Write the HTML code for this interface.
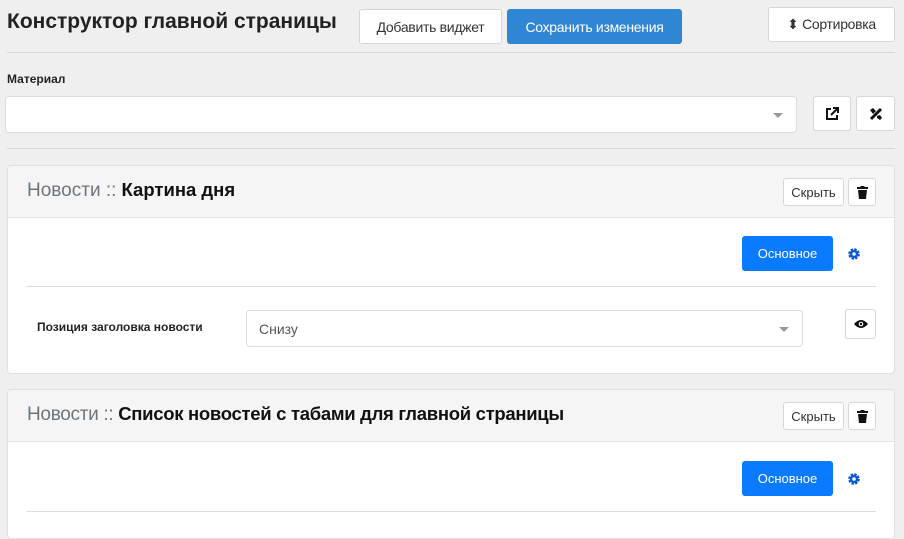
<!DOCTYPE html>
<html><head><meta charset="utf-8"><style>
*{box-sizing:border-box;margin:0;padding:0}
body{width:904px;height:525px;overflow:hidden;background:#efefef;font-family:"Liberation Sans",sans-serif;position:relative;color:#212529}
.a{position:absolute}
.btn{position:absolute;background:#fff;border:1px solid #d6d6d6;border-radius:3px;display:flex;align-items:center;justify-content:center;font-size:13px;color:#333}
.card{position:absolute;left:7px;width:888px;background:#fff;border:1px solid #e0e0e0;border-radius:4px;overflow:hidden}
.hd{height:52px;background:#f5f5f5;border-bottom:1px solid #e3e3e3;position:relative}
.ttl{position:absolute;left:19px;top:13px;font-size:18.5px;color:#111;font-weight:bold;white-space:nowrap}
.ttl span{color:#6c757d;font-weight:normal;font-size:19px}
.blue{position:absolute;background:#0a7bff;color:#fff;border-radius:3px;font-size:13px;display:flex;align-items:center;justify-content:center}
.caret{position:absolute;width:0;height:0;border-left:5px solid transparent;border-right:5px solid transparent;border-top:5px solid #999}
</style></head><body>
<div class="a" style="left:7px;top:10px;font-size:21px;font-weight:bold;color:#222;white-space:nowrap">Конструктор главной страницы</div>
<div class="btn" style="left:359px;top:9px;width:143px;height:35px;font-size:14px;letter-spacing:-0.3px">Добавить виджет</div>
<div class="btn" style="left:507px;top:9px;width:175px;height:35px;font-size:14px;background:#2f87d4;border-color:#2f87d4;color:#fff;letter-spacing:-0.3px">Сохранить изменения</div>
<div class="btn" style="left:768px;top:7px;width:127px;height:35px;font-size:14px;letter-spacing:-0.3px">⬍&nbsp;Сортировка</div>
<div class="a" style="left:7px;top:52px;width:888px;height:1px;background:#d8d8d8"></div>
<div class="a" style="left:7px;top:72px;font-size:12px;font-weight:bold">Материал</div>
<div class="a" style="left:5px;top:96px;width:792px;height:37px;background:#fff;border:1px solid #ddd;border-radius:4px"></div>
<div class="caret" style="left:773px;top:113px"></div>
<div class="btn" style="left:813px;top:96px;width:38px;height:35px"><svg width="14" height="14" viewBox="0 0 14 14"><path d="M6 2H2v10h10V8" fill="none" stroke="#111" stroke-width="2"/><path d="M8 1h5v5M13 1L6 8" fill="none" stroke="#111" stroke-width="2"/></svg></div>
<div class="btn" style="left:856px;top:96px;width:39px;height:35px"><svg width="16" height="16" viewBox="0 0 16 16"><path d="M3 13L13 3" stroke="#111" stroke-width="3"/><path d="M2 4l3-2 3 3-3 3zM9 10l3-1 2 3-2 2-3-2z" fill="#111"/></svg></div>
<div class="a" style="left:7px;top:148px;width:888px;height:1px;background:#d8d8d8"></div>

<div class="card" style="top:165px;height:209px">
<div class="hd"><div class="ttl"><span>Новости ::</span> Картина дня</div>
<div class="btn" style="left:775px;top:12px;width:61px;height:28px">Скрыть</div>
<div class="btn" style="left:840px;top:12px;width:28px;height:28px"><svg width="11" height="13" viewBox="0 0 11 13"><rect x="0" y="1" width="11" height="2" fill="#111"/><rect x="3.5" y="0" width="4" height="2" fill="#111"/><path d="M1 4h9l-1 9H2z" fill="#111"/></svg></div></div>
<div class="blue" style="left:734px;top:70px;width:91px;height:35px">Основное</div>
<svg class="a" style="left:840px;top:82px" width="12" height="12" viewBox="0 0 12 12"><circle cx="6" cy="6" r="4.3" fill="none" stroke="#0a5bd0" stroke-width="3" stroke-dasharray="2.2 1.2"/><circle cx="6" cy="6" r="3" fill="none" stroke="#0a5bd0" stroke-width="2.5"/></svg>
<div class="a" style="left:18px;top:120px;width:850px;height:1px;background:#ddd"></div>
<div class="a" style="left:29px;top:154px;font-size:12px;font-weight:bold">Позиция заголовка новости</div>
<div class="a" style="left:238px;top:144px;width:557px;height:37px;border:1px solid #ddd;border-radius:4px"></div>
<div class="a" style="left:251px;top:155px;font-size:14px;color:#555">Снизу</div>
<div class="caret" style="left:771px;top:161px"></div>
<div class="btn" style="left:837px;top:143px;width:31px;height:30px"><svg width="14" height="10" viewBox="0 0 14 10"><path d="M0 5Q7 -3 14 5Q7 13 0 5z" fill="#111"/><circle cx="7" cy="5" r="2.3" fill="#fff"/><circle cx="7" cy="5" r="1.2" fill="#111"/></svg></div>
</div>

<div class="card" style="top:389px;height:150px">
<div class="hd"><div class="ttl" style="letter-spacing:-0.3px"><span>Новости ::</span> Список новостей с табами для главной страницы</div>
<div class="btn" style="left:775px;top:12px;width:61px;height:28px">Скрыть</div>
<div class="btn" style="left:840px;top:12px;width:28px;height:28px"><svg width="11" height="13" viewBox="0 0 11 13"><rect x="0" y="1" width="11" height="2" fill="#111"/><rect x="3.5" y="0" width="4" height="2" fill="#111"/><path d="M1 4h9l-1 9H2z" fill="#111"/></svg></div></div>
<div class="blue" style="left:734px;top:71px;width:91px;height:35px">Основное</div>
<svg class="a" style="left:840px;top:83px" width="12" height="12" viewBox="0 0 12 12"><circle cx="6" cy="6" r="4.3" fill="none" stroke="#0a5bd0" stroke-width="3" stroke-dasharray="2.2 1.2"/><circle cx="6" cy="6" r="3" fill="none" stroke="#0a5bd0" stroke-width="2.5"/></svg>
<div class="a" style="left:18px;top:121px;width:850px;height:1px;background:#ddd"></div>
</div>
</body></html>
